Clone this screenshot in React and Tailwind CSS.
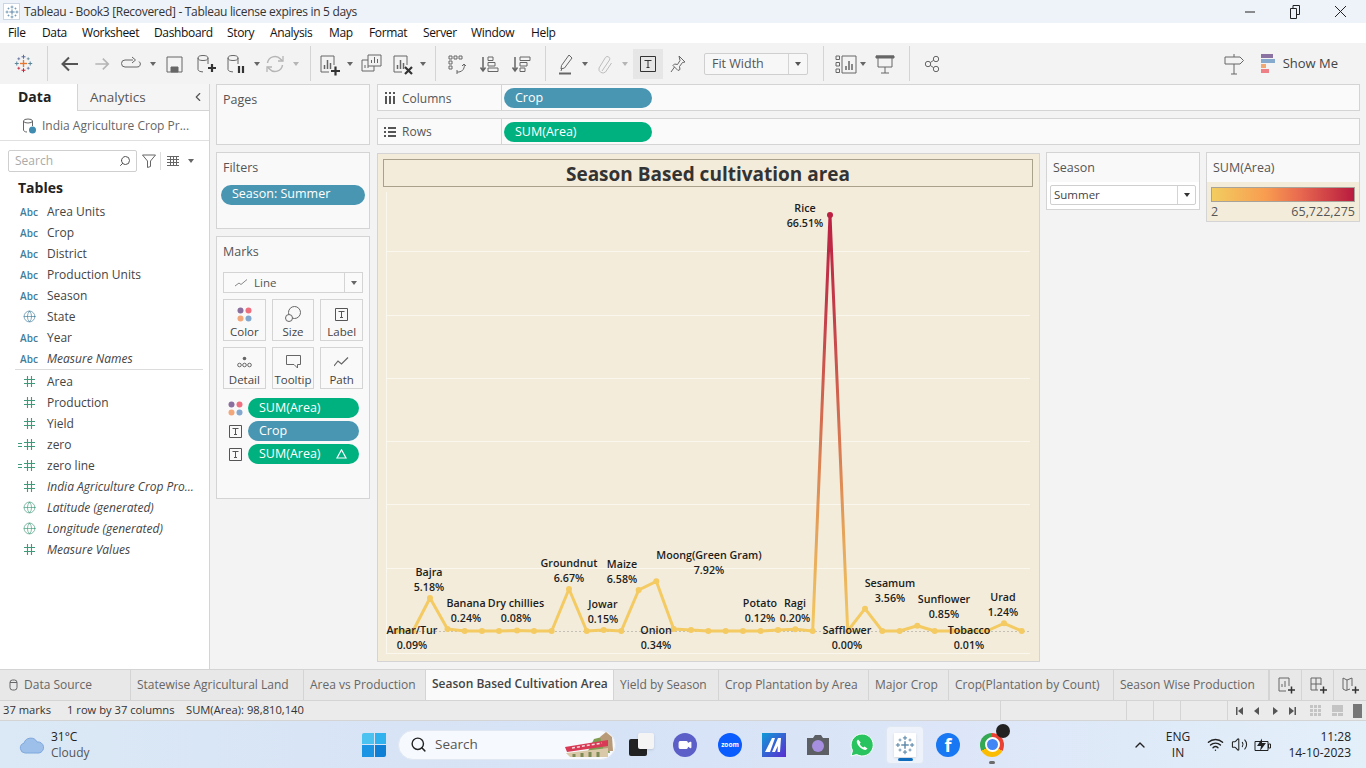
import { ChevronLeft, Globe, Search, Wifi, Volume2, ChevronUp, Video } from "lucide-react";

const points = [
  [395.6, 631], [413, 631], [430, 598], [447.5, 629], [464.7, 631], [482, 631], [499, 631], [517, 630.5], [534, 631],
  [551.7, 631], [569, 589], [586.7, 631], [603.7, 630], [621.3, 631], [638.7, 590], [656.3, 581.3], [673.7, 629],
  [691, 630], [708.3, 631], [725.7, 631], [743, 631], [760.7, 631], [778, 630], [795.3, 629.3], [812.7, 631],
  [830, 215], [847.7, 631], [865, 608.7], [882.3, 631], [899.7, 631], [917.3, 625.7], [934.7, 631], [952, 631],
  [969.3, 631], [986.7, 631], [1004, 623.3], [1021.7, 631],
];

const labels = [
  ["Rice", "66.51%", 805, 208],
  ["Arhar/Tur", "0.09%", 412, 630],
  ["Bajra", "5.18%", 429, 572],
  ["Banana", "0.24%", 466, 603],
  ["Dry chillies", "0.08%", 516, 603],
  ["Groundnut", "6.67%", 569, 563],
  ["Jowar", "0.15%", 603, 604],
  ["Maize", "6.58%", 622, 564],
  ["Moong(Green Gram)", "7.92%", 709, 555],
  ["Onion", "0.34%", 656, 630],
  ["Potato", "0.12%", 760, 603],
  ["Ragi", "0.20%", 795, 603],
  ["Safflower", "0.00%", 847, 630],
  ["Sesamum", "3.56%", 890, 583],
  ["Sunflower", "0.85%", 944, 599],
  ["Tobacco", "0.01%", 969, 630],
  ["Urad", "1.24%", 1003, 597],
];

const fields = [
  ["abc", "Area Units"], ["abc", "Crop"], ["abc", "District"], ["abc", "Production Units"],
  ["abc", "Season"], ["globe", "State"], ["abc", "Year"], ["abc", "Measure Names", true],
];

const measures = [
  ["hash", "Area"], ["hash", "Production"], ["hash", "Yield"], ["calc", "zero"], ["calc", "zero line"],
  ["hash", "India Agriculture Crop Pro...", true], ["gglobe", "Latitude (generated)", true],
  ["gglobe", "Longitude (generated)", true], ["hash", "Measure Values", true],
];

const menus = [
  ["File", "w-[34px]"], ["Data", "w-[40px]"], ["Worksheet", "w-[72px]"], ["Dashboard", "w-[73px]"], ["Story", "w-[43px]"],
  ["Analysis", "w-[59px]"], ["Map", "w-[40px]"], ["Format", "w-[54px]"], ["Server", "w-[48px]"], ["Window", "w-[60px]"], ["Help", "w-[40px]"],
];

const tabs = [
  ["Statewise Agricultural Land", "w-[173px]"],
  ["Area vs Production", "w-[122px]"],
  ["Season Based Cultivation Area", "w-[188px]", true],
  ["Yield by Season", "w-[105px]"],
  ["Crop Plantation by Area", "w-[150px]"],
  ["Major Crop", "w-[80px]"],
  ["Crop(Plantation by Count)", "w-[165px]"],
  ["Season Wise Production", "w-[155px]"],
];

function TableauMark({ size = 20, c1 = "#5b87a8", c2 = "#5b87a8", c3 = "#5b87a8", c4 = "#5b87a8" }) {
  const plus = (x, y, r, color, w) => (
    <g stroke={color} strokeWidth={w}>
      <line x1={x - r} y1={y} x2={x + r} y2={y} />
      <line x1={x} y1={y - r} x2={x} y2={y + r} />
    </g>
  );
  return (
    <svg width={size} height={size} viewBox="0 0 24 24" fill="none">
      {plus(12, 12, 4.5, c1, 1.7)}
      {plus(12, 3.5, 2.5, c2, 1.3)}
      {plus(12, 20.5, 2.5, c3, 1.3)}
      {plus(3.5, 12, 2.5, c4, 1.3)}
      {plus(20.5, 12, 2.5, c4, 1.3)}
      {plus(6, 6, 1.8, c2, 1)}
      {plus(18, 6, 1.8, c4, 1)}
      {plus(6, 18, 1.8, c3, 1)}
      {plus(18, 18, 1.8, c2, 1)}
    </svg>
  );
}

function Ic({ children, w = 24, h = 24, stroke = "#666" }) {
  return (
    <svg width={w} height={h} viewBox={`0 0 ${w} ${h}`} fill="none" stroke={stroke} strokeWidth="1">
      {children}
    </svg>
  );
}

function Slot({ className, children }) {
  return <div className={`flex items-center justify-center shrink-0 ${className}`}>{children}</div>;
}

function Caret({ color = "#666" }) {
  return (
    <svg width="6" height="4" viewBox="0 0 6 4" className="block shrink-0">
      <path d="M0 0h6L3 4z" fill={color} />
    </svg>
  );
}

function Sep() {
  return <div className="w-px h-[35px] bg-[#d4d4d4] shrink-0" />;
}

function Cyl({ children, stroke = "#666" }) {
  return (
    <Ic stroke={stroke}>
      <ellipse cx="10" cy="6" rx="5" ry="2.5" />
      <path d="M5 6v11.500c0 1.300 2 2.300 5 2.400M15 6v6" />
      {children}
    </Ic>
  );
}

function BarBox({ children }) {
  return (
    <Ic>
      <path d="M17 13V4H4v16h8" />
      <path d="M7.500 17v-4M10.500 17V8M13.500 17v-6" strokeWidth="1.500" />
      {children}
    </Ic>
  );
}

function Toolbar() {
  return (
    <div className="flex items-center h-[41px] bg-[#f3f3f3] shrink-0">
      <Slot className="w-[47px]">
        <TableauMark size={19} c1="#e8762c" c2="#5b6c9e" c3="#c72037" c4="#5b879b" />
      </Slot>
      <Sep />
      <Slot className="w-[44px]">
        <Ic stroke="#555"><path d="M20 12H5M11 5.500 4.500 12l6.500 6.500" strokeWidth="2" /></Ic>
      </Slot>
      <Slot className="w-[20px]">
        <Ic stroke="#b5b5b5"><path d="M4 12h15M13 5.500l6.500 6.500-6.500 6.500" strokeWidth="2" /></Ic>
      </Slot>
      <Slot className="w-[38px]">
        <Ic><path d="M14 8H6a3 3 0 0 0 0 7h12a3 3 0 0 0 2-5.500M13 5l3.500 3-3.500 3" /></Ic>
      </Slot>
      <Slot className="w-[5px]"><Caret /></Slot>
      <Slot className="w-[38px]">
        <Ic><path d="M5 5h15v15H5z" /><path d="M9 20v-5h7v5z" fill="#666" /></Ic>
      </Slot>
      <Slot className="w-[24px]">
        <Cyl><path d="M15 16h8M19 12v8" strokeWidth="2.200" stroke="#333" /></Cyl>
      </Slot>
      <Slot className="w-[36px]">
        <Cyl><path d="M16 14v7M20 14v7" strokeWidth="2.200" stroke="#333" /></Cyl>
      </Slot>
      <Slot className="w-[7px]"><Caret /></Slot>
      <Slot className="w-[30px]">
        <Ic stroke="#b5b5b5"><path d="M4.500 11a7.500 7.500 0 0 1 13-4l2 2M19.500 13a7.500 7.500 0 0 1-13 4l-2-2" strokeWidth="1.500" /><path d="M20 4v5h-5M4 20v-5h5" strokeWidth="1.300" /></Ic>
      </Slot>
      <Slot className="w-[12px]"><Caret color="#b5b5b5" /></Slot>
      <div className="w-[8px] shrink-0" />
      <Sep />
      <Slot className="w-[36px]">
        <BarBox><path d="M14 19h9M18.500 14.500v9" strokeWidth="2.200" stroke="#333" /></BarBox>
      </Slot>
      <Slot className="w-[6px]"><Caret /></Slot>
      <Slot className="w-[36px]">
        <Ic><path d="M9 14V3h13v11H9z" /><path d="M12.500 11V8M15.500 11V5M18.500 11V7" /><path d="M9 8H3v11h12v-5" /><path d="M6 16v-3M9 16v-2" /></Ic>
      </Slot>
      <Slot className="w-[26px]">
        <BarBox><path d="M15 15l7 7M22 15l-7 7" strokeWidth="2.200" stroke="#333" /></BarBox>
      </Slot>
      <Slot className="w-[15px]"><Caret /></Slot>
      <div className="w-[5px] shrink-0" />
      <Sep />
      <Slot className="w-[42px]">
        <Ic>
          <path d="M4 4h3v3H4zM9 4h3v3H9zM14 4h3v3h-3zM4 9h3v3H4zM4 14h3v3H4zM14 20h-2M19 12a6 6 0 0 1-5 8" />
          <path d="M17 14l2-2 2 2M12 18v4" />
        </Ic>
      </Slot>
      <Slot className="w-[22px]">
        <Ic w={22}><path d="M5 5v13M2.500 15.500 5 19l2.500-3.500" strokeWidth="1.500" /><path d="M10 5h5v3.500h-5zM10 10.500h7V14h-7zM10 16h10v3.500H10z" /></Ic>
      </Slot>
      <Slot className="w-[42px]">
        <Ic w={22}><path d="M5 5v13M2.500 15.500 5 19l2.500-3.500" strokeWidth="1.500" /><path d="M10 5h10v3.500H10zM10 10.500h7V14h-7zM10 16h5v3.500h-5z" /></Ic>
      </Slot>
      <div className="w-[3px] shrink-0" />
      <Sep />
      <div className="w-[6px] shrink-0" />
      <Slot className="w-[30px]">
        <Ic><path d="M14 3l3 3-7.500 10-3.500 1 .5-3.500zM7 16l-1 3" /><path d="M4 21.500h12" strokeWidth="2" /></Ic>
      </Slot>
      <Slot className="w-[6px]"><Caret /></Slot>
      <Slot className="w-[34px]">
        <Ic stroke="#bdbdbd"><path d="M9 19l7.500-11a2.400 2.400 0 0 0-4-2.600L6 16a4 4 0 0 0 6.500 4l6-9" /></Ic>
      </Slot>
      <Slot className="w-[6px]"><Caret color="#b5b5b5" /></Slot>
      <div className="w-[5px] shrink-0" />
      <Slot className="w-[30px] h-[30px] bg-[#e6e6e6]">
        <Ic w={18} h={18} stroke="#333">
          <path d="M1.500 1.500h15v15h-15z" />
          <path d="M5.500 5.500h7M9 5.500v7M7.500 12.500h3" strokeWidth="1" />
        </Ic>
      </Slot>
      <Slot className="w-[29px]">
        <Ic w={18} h={18}><path d="M10 1l6 6-2.500.5-3 4 .5 3-2 1-5-5 1.500-1.500 3 .5 2.500-4zM5.500 12 2 17" /></Ic>
      </Slot>
      <div className="w-[12px] shrink-0" />
      <div className="flex w-[104px] h-[22px] border border-[#cfcfcf] rounded-[2px] bg-[#f7f7f7] shrink-0">
        <div className="w-[84px] border-r border-[#d4d4d4] pl-[7px] text-[12.5px] leading-[19px] text-[#555]">Fit Width</div>
        <div className="flex-1 flex items-center justify-center"><Caret color="#555" /></div>
      </div>
      <div className="w-[15px] shrink-0" />
      <Sep />
      <div className="w-[7px] shrink-0" />
      <Slot className="w-[29px]">
        <Ic>
          <path d="M8 4h14v17H8z" />
          <path d="M12 18v-4M15 18V9M18 18v-6" strokeWidth="1.500" />
          <path d="M2 4h3.500v3.500H2zM2 10.500h3.500V14H2zM2 17h3.500v3.500H2z" />
        </Ic>
      </Slot>
      <Slot className="w-[6px]"><Caret /></Slot>
      <Slot className="w-[38px]">
        <Ic><path d="M3 4h18M5 4v11h14V4M12 15v6M8 21h8" /><path d="M3 4h18v2H3z" fill="#666" /></Ic>
      </Slot>
      <div className="w-[5px] shrink-0" />
      <Sep />
      <Slot className="w-[44px]">
        <Ic>
          <circle cx="8" cy="12" r="2.700" /><circle cx="16" cy="7" r="2.700" /><circle cx="16" cy="17" r="2.700" />
          <path d="M10.300 10.500l3.400-2.200M10.300 13.500l3.400 2.200" />
        </Ic>
      </Slot>
      <div className="ml-auto flex items-center pr-[28px]">
        <Slot className="w-[30px]">
          <Ic><path d="M3 5h15l3.500 3.500L18 12H3zM12 2v3M12 12v10M9 22h6" /></Ic>
        </Slot>
        <div className="flex flex-col ml-[12px] w-[14px] gap-px">
          <div className="h-[4px] w-[12px] bg-[#8a72a3]" />
          <div className="h-[4px] w-[14px] bg-[#86aacd]" />
          <div className="h-[4px] w-[5px] bg-[#f1a873]" />
          <div className="h-[4px] w-[8px] bg-[#ef7f86]" />
        </div>
        <span className="ml-[8px] text-[13px] text-[#444] whitespace-nowrap">Show Me</span>
      </div>
    </div>
  );
}

function FieldIcon({ type }) {
  if (type === "abc") return <span className="text-[10px] leading-none font-semibold text-[#3f7d9b]">Abc</span>;
  if (type === "globe") return <Globe size={13} strokeWidth={1.2} color="#3f7d9b" />;
  if (type === "gglobe") return <Globe size={13} strokeWidth={1.2} color="#3e9a78" />;
  return (
    <span className="flex items-center">
      {type === "calc" && (
        <svg width="5" height="6" viewBox="0 0 5 6" stroke="#3e9a78" className="mr-px -ml-[5px]">
          <path d="M0 1.500h4M0 4.500h4" />
        </svg>
      )}
      <svg width="11" height="11" viewBox="0 0 11 11" stroke="#3e9a78" strokeWidth="1.100">
        <path d="M3.500 0v11M7.500 0v11M0 3.500h11M0 7.500h11" />
      </svg>
    </span>
  );
}

function FieldRow({ icon, name, italic }) {
  return (
    <div className="flex items-center h-[21px]">
      <div className="w-[47px] pl-[19px] shrink-0">
        <div className="w-[20px] flex justify-center"><FieldIcon type={icon} /></div>
      </div>
      <span className={`text-[12px] text-[#444] whitespace-nowrap ${italic ? "italic" : ""}`}>{name}</span>
    </div>
  );
}

function DataPanel() {
  return (
    <div className="w-[210px] shrink-0 bg-white border-r border-[#d4d4d4] flex flex-col">
      <div className="flex h-[27px] shrink-0">
        <div className="w-[77px] pl-[18px] text-[14px] leading-[26px] font-bold text-[#222]">Data</div>
        <div className="flex-1 flex items-center pl-[12px] bg-[#f5f5f5] border-l border-b border-[#d4d4d4]">
          <span className="text-[13.5px] text-[#555]">Analytics</span>
          <ChevronLeft size={14} color="#555" className="ml-auto mr-[4px]" />
        </div>
      </div>
      <div className="flex items-center h-[30px] border-b border-[#e0e0e0] pl-[21px] shrink-0">
        <svg width="16" height="18" viewBox="0 0 16 18" fill="none" stroke="#666">
          <ellipse cx="7" cy="4" rx="4.500" ry="2" />
          <path d="M2.500 4v9c0 1 1.500 2 3.500 2M11.500 4v5" />
          <circle cx="11.500" cy="13" r="3.500" fill="#3f8cb0" stroke="none" />
        </svg>
        <span className="ml-[5px] text-[12px] text-[#666] whitespace-nowrap">India Agriculture Crop Pr...</span>
      </div>
      <div className="flex items-center h-[22px] mt-[9px] shrink-0">
        <div className="ml-[8px] w-[129px] h-[22px] border border-[#cfcfcf] rounded-[2px] flex items-center pl-[6px] pr-[5px]">
          <span className="text-[12px] text-[#aaa]">Search</span>
          <Search size={12} color="#555" className="ml-auto -scale-x-100" />
        </div>
        <svg width="14" height="14" viewBox="0 0 14 14" fill="none" stroke="#666" className="ml-[5px]">
          <path d="M.5 1h13L8.500 7v5.500L5.500 13.500V7z" />
        </svg>
        <div className="w-px h-[18px] bg-[#ddd] ml-[4px]" />
        <svg width="12" height="10" viewBox="0 0 12 10" stroke="#666" className="ml-[6px]" strokeWidth="1">
          <path d="M0 .5h12M0 3.500h12M0 6.500h12M0 9.500h12M3.500 0v10M6.500 0v10M9.500 0v10" />
        </svg>
        <span className="ml-[9px]"><Caret /></span>
      </div>
      <div className="pl-[18px] mt-[6px] text-[14px] leading-[20px] font-bold text-[#222]">Tables</div>
      <div className="mt-[3px]">
        {fields.map(([icon, name, italic]) => (
          <FieldRow key={name} icon={icon} name={name} italic={italic} />
        ))}
      </div>
      <div className="h-px bg-[#dcdcdc] ml-[15px] mr-[6px]" />
      <div className="mt-px">
        {measures.map(([icon, name, italic]) => (
          <FieldRow key={name} icon={icon} name={name} italic={italic} />
        ))}
      </div>
    </div>
  );
}

function Pill({ className, children }) {
  return (
    <div className={`flex items-center rounded-full h-[20px] pl-[11px] pr-[12px] text-[12.5px] text-white whitespace-nowrap ${className}`}>
      {children}
    </div>
  );
}

function Dots() {
  return (
    <svg width="15" height="15" viewBox="0 0 15 15">
      <circle cx="3.500" cy="3.500" r="3" fill="#8b6f9e" />
      <circle cx="11.500" cy="3.500" r="3" fill="#ef6f7f" />
      <circle cx="3.500" cy="11.500" r="3" fill="#f2a77a" />
      <circle cx="11.500" cy="11.500" r="3" fill="#83a8cf" />
    </svg>
  );
}

function TBox() {
  return (
    <svg width="13" height="13" viewBox="0 0 13 13" fill="none" stroke="#555">
      <path d="M.5.500h12v12H.5z" />
      <path d="M3.500 3.500h6M6.500 3.500v6M5 9.500h3" />
    </svg>
  );
}

function MarkButton({ label, children }) {
  return (
    <div className="flex-1 h-[42px] border border-[#d4d4d4] flex flex-col items-center pt-[5px]">
      <div className="h-[18px] flex items-center">{children}</div>
      <span className="text-[11.5px] leading-[16px] text-[#444] mt-px">{label}</span>
    </div>
  );
}

function ShelfColumn() {
  return (
    <div className="w-[154px] shrink-0 ml-[6px] flex flex-col">
      <div className="h-[61px] border border-[#d4d4d4] bg-[#f9f9f9] pl-[6px] pt-[6px] text-[12.5px] text-[#555] shrink-0">Pages</div>
      <div className="h-[77px] mt-[7px] border border-[#d4d4d4] bg-[#f9f9f9] shrink-0">
        <div className="pl-[6px] pt-[6px] text-[12.5px] text-[#555]">Filters</div>
        <Pill className="bg-[#4996b2] mx-[4px] mt-[7px]">Season: Summer</Pill>
      </div>
      <div className="h-[263px] mt-[7px] border border-[#d4d4d4] bg-[#f9f9f9] px-[6px] shrink-0">
        <div className="pt-[6px] text-[12.5px] text-[#555] leading-[18px]">Marks</div>
        <div className="flex items-center h-[21px] mt-[11px] border border-[#d4d4d4] bg-[#fafafa]">
          <svg width="12" height="8" viewBox="0 0 12 8" fill="none" stroke="#888" className="ml-[11px]">
            <path d="M0 7l4-3 2 1.500L12 .5" />
          </svg>
          <span className="ml-[7px] text-[11.5px] text-[#555]">Line</span>
          <div className="ml-auto w-[18px] h-full border-l border-[#d4d4d4] flex items-center justify-center"><Caret /></div>
        </div>
        <div className="flex gap-[6px] mt-[6px]">
          <MarkButton label="Color"><Dots /></MarkButton>
          <MarkButton label="Size">
            <svg width="16" height="16" viewBox="0 0 16 16" fill="none" stroke="#666">
              <circle cx="9.500" cy="6.500" r="6" />
              <circle cx="4" cy="12" r="3.500" fill="#f9f9f9" />
            </svg>
          </MarkButton>
          <MarkButton label="Label"><TBox /></MarkButton>
        </div>
        <div className="flex gap-[6px] mt-[6px]">
          <MarkButton label="Detail">
            <svg width="15" height="12" viewBox="0 0 15 12" fill="none" stroke="#666">
              <circle cx="7.500" cy="2.500" r="1.800" fill="#666" stroke="none" />
              <circle cx="2.500" cy="9" r="1.800" /><circle cx="7.500" cy="9" r="1.800" /><circle cx="12.500" cy="9" r="1.800" />
            </svg>
          </MarkButton>
          <MarkButton label="Tooltip">
            <svg width="15" height="14" viewBox="0 0 15 14" fill="none" stroke="#666">
              <path d="M.5.500h14v9h-3v3.500l-3.500-3.500H.5z" />
            </svg>
          </MarkButton>
          <MarkButton label="Path">
            <svg width="15" height="10" viewBox="0 0 15 10" fill="none" stroke="#666" strokeWidth="1.200">
              <path d="M0 9l4-5 3.500 3L14 .5" />
            </svg>
          </MarkButton>
        </div>
        <div className="flex flex-col gap-[3px] mt-[9px]">
          <div className="flex items-center">
            <div className="w-[25px] flex justify-center shrink-0"><Dots /></div>
            <Pill className="bg-[#00b180] w-[111px]">SUM(Area)</Pill>
          </div>
          <div className="flex items-center">
            <div className="w-[25px] flex justify-center shrink-0"><TBox /></div>
            <Pill className="bg-[#4996b2] w-[111px]">Crop</Pill>
          </div>
          <div className="flex items-center">
            <div className="w-[25px] flex justify-center shrink-0"><TBox /></div>
            <Pill className="bg-[#00b180] w-[111px]">
              SUM(Area)
              <svg width="11" height="10" viewBox="0 0 11 10" fill="none" stroke="white" strokeWidth="1.200" className="ml-auto">
                <path d="M5.500 .800 10 9H1z" />
              </svg>
            </Pill>
          </div>
        </div>
      </div>
    </div>
  );
}

function Shelf({ label, icon, pill, className, textClass }) {
  return (
    <div className={`flex h-[27px] w-[983px] border border-[#d4d4d4] bg-[#fafafa] shrink-0 ${className}`}>
      <div className="w-[124px] flex items-center pl-[6px] border-r border-[#d4d4d4] shrink-0">
        <span className="w-[18px] flex">{icon}</span>
        <span className={`text-[12px] text-[#555] ${textClass}`}>{label}</span>
      </div>
      <div className="pl-[2px] pt-[3px]">{pill}</div>
    </div>
  );
}

function Chart() {
  const rows = [251, 315, 378, 441, 504, 568, 653];
  const yellow = "#f4ca62";
  const line = points.slice(0, 25).map(p => p.join(",")).join(" ");
  const tail = points.slice(26).map(p => p.join(",")).join(" ");
  return (
    <svg width="650" height="471" viewBox="383 187 650 471" className="block">
      <defs>
        <linearGradient id="rice" gradientUnits="userSpaceOnUse" x1="0" y1="215" x2="0" y2="631">
          <stop offset="0" stopColor="#bb1f42" />
          <stop offset="0.25" stopColor="#c4404a" />
          <stop offset="0.5" stopColor="#d46f50" />
          <stop offset="0.75" stopColor="#e5a159" />
          <stop offset="1" stopColor={yellow} />
        </linearGradient>
      </defs>
      <line x1="386.500" y1="192" x2="386.500" y2="653" stroke="#faf7ef" />
      {rows.map(y => (
        <line key={y} x1="386" y1={y + 0.5} x2="1030" y2={y + 0.5} stroke="#faf7ef" />
      ))}
      <line x1="387" y1="631.500" x2="1030" y2="631.500" stroke="#c4c0b6" strokeDasharray="2 2" />
      <polyline points={line} fill="none" stroke={yellow} strokeWidth="3" strokeLinejoin="round" />
      <polyline points={tail} fill="none" stroke={yellow} strokeWidth="3" strokeLinejoin="round" />
      <path d="M812.700 631 830 215 847.700 631" fill="none" stroke="url(#rice)" strokeWidth="3" strokeLinejoin="round" />
      {points.map(([x, y]) => (
        <circle key={x} cx={x} cy={y} r="3" fill={y === 215 ? "#bb1f42" : yellow} />
      ))}
      {labels.map(([name, pct, x, y]) => (
        <text key={name} textAnchor="middle" fontSize="10.7" fontWeight="600" fill="#1c1c1c">
          <tspan x={x} y={y + 4}>{name}</tspan>
          <tspan x={x} y={y + 19}>{pct}</tspan>
        </text>
      ))}
    </svg>
  );
}

function Main() {
  return (
    <div className="flex flex-1 min-h-0 bg-[#f3f3f3]">
      <DataPanel />
      <ShelfColumn />
      <div className="ml-[7px] flex flex-col">
        <Shelf
          label="Columns"
          textClass="pt-[2px]"
          icon={
            <svg width="12" height="12" viewBox="0 0 12 12" fill="#555">
              <path d="M1 0h2v2H1zM5 0h2v2H5zM9 0h2v2H9zM1 4h2v8H1zM5 4h2v8H5zM9 4h2v8H9z" />
            </svg>
          }
          pill={<Pill className="bg-[#4996b2] w-[148px]">Crop</Pill>}
        />
        <Shelf
          className="mt-[7px]"
          label="Rows"
          icon={
            <svg width="12" height="10" viewBox="0 0 12 10" fill="#555">
              <path d="M0 0h2v2H0zM4 0h8v2H4zM0 4h2v2H0zM4 4h8v2H4zM0 8h2v2H0zM4 8h8v2H4z" />
            </svg>
          }
          pill={<Pill className="bg-[#00b180] w-[148px]">SUM(Area)</Pill>}
        />
        <div className="flex mt-[8px]">
          <div className="w-[663px] h-[509px] border border-[#d4d4d4] bg-[#f3ecdb] pt-[5px] pl-[5px] shrink-0">
            <div className="w-[650px] h-[28px] border border-[#a9a18c] flex items-center justify-center pt-[3px] text-[19px] font-bold text-[#333]">
              Season Based cultivation area
            </div>
            <Chart />
          </div>
          <div className="ml-[6px] w-[154px] h-[58px] -mt-px border border-[#d4d4d4] bg-white shrink-0">
            <div className="h-[29px] bg-[#f9f9f9] pl-[6px] pt-[6px] text-[12.5px] leading-[18px] text-[#555]">Season</div>
            <div className="mx-[3px] mt-[3px] h-[20px] border border-[#cfcfcf] rounded-[2px] bg-white flex items-center">
              <span className="pl-[3px] text-[11.5px] text-[#444]">Summer</span>
              <div className="ml-auto w-[18px] h-full border-l border-[#d4d4d4] flex items-center justify-center"><Caret color="#333" /></div>
            </div>
          </div>
          <div className="ml-[6px] w-[154px] h-[70px] -mt-px border border-[#d4d4d4] bg-[#f3ecdb] shrink-0">
            <div className="h-[29px] bg-[#f9f9f9] pl-[6px] pt-[6px] text-[12.5px] leading-[18px] text-[#555]">SUM(Area)</div>
            <div className="mx-[4px] mt-[5px] h-[15px] border border-[#a8a39a] bg-[linear-gradient(90deg,#f2cd60_0%,#f89c50_38%,#e8694f_62%,#b81b3f_100%)]" />
            <div className="flex justify-between mx-[4px] mt-[2px] text-[12.5px] leading-[16px] text-[#555]">
              <span>2</span>
              <span>65,722,275</span>
            </div>
          </div>
        </div>
      </div>
    </div>
  );
}

function Tabs() {
  return (
    <div className="flex h-[31px] bg-[#e8e8e8] border-t border-[#d4d4d4] shrink-0">
      <div className="w-[131px] flex items-center pl-[9px] border-r border-[#d4d4d4] shrink-0 text-[12px] text-[#666]">
        <svg width="9" height="12" viewBox="0 0 9 12" fill="none" stroke="#666" className="mr-[6px]">
          <rect x="1" y="1" width="7" height="10" rx="2.500" />
          <path d="M1 3.500h7" />
        </svg>
        Data Source
      </div>
      {tabs.map(([name, w, active]) => (
        <div
          key={name}
          className={`${w} shrink-0 flex items-center pl-[6px] border-r border-[#d4d4d4] whitespace-nowrap text-[12px] ${
            active ? "bg-[#fafafa] font-semibold text-[#444] pb-[2px]" : "text-[#666]"
          }`}
        >
          {name}
        </div>
      ))}
      <div className="w-[33px] shrink-0 flex items-center justify-center border-r border-l border-[#d4d4d4]">
        <svg width="18" height="18" viewBox="0 0 18 18" fill="none" stroke="#666">
          <path d="M12 10V2H2v13h7M5 11V8M8 11V5" /><path d="M11 14h7M14.500 10.500v7" stroke="#333" strokeWidth="1.500" />
        </svg>
      </div>
      <div className="w-[32px] shrink-0 flex items-center justify-center border-r border-[#d4d4d4]">
        <svg width="18" height="18" viewBox="0 0 18 18" fill="none" stroke="#666">
          <path d="M12 9V2H2v12h7M2 8h10M7 2v12" /><path d="M11 14h7M14.500 10.500v7" stroke="#333" strokeWidth="1.500" />
        </svg>
      </div>
      <div className="flex-1 flex items-center justify-center">
        <svg width="18" height="18" viewBox="0 0 18 18" fill="none" stroke="#666">
          <path d="M2 2l4 2 5-2v8M2 2v11l3 1.500 4-1.500M6 4v10" /><path d="M11 14h7M14.500 10.500v7" stroke="#333" strokeWidth="1.500" />
        </svg>
      </div>
    </div>
  );
}

function StatusBar() {
  return (
    <div className="flex h-[21px] bg-[#ebebeb] border-t border-[#d4d4d4] border-b items-center text-[11.2px] text-[#333] shrink-0">
      <span className="w-[67px] pl-[3px] shrink-0">37 marks</span>
      <span className="w-[119px] shrink-0">1 row by 37 columns</span>
      <span className="w-[814px] shrink-0">SUM(Area): 98,810,140</span>
      <div className="w-[126px] h-full border-l border-[#d4d4d4] shrink-0" />
      <div className="w-[27px] h-full border-l border-[#d4d4d4] shrink-0" />
      <div className="w-[27px] h-full border-l border-[#d4d4d4] shrink-0" />
      <div className="w-[47px] h-full border-l border-[#d4d4d4] shrink-0" />
      <div className="flex-1 h-full border-l border-[#d4d4d4] flex items-center pl-[8px]">
        <svg width="126" height="14" viewBox="0 0 126 14" fill="#555">
          <path d="M0 3h1.500v8H0zM7 3v8L2 7zM23 3v8l-5-4zM37 3l5 4-5 4zM53 3l5 4-5 4zM58.500 3H60v8h-1.500z" />
          <g fill="#c4c4c4">
            <path d="M74 1h3v3h-3zM78 1h3v3h-3zM82 1h3v3h-3zM74 5h3v3h-3zM78 5h3v3h-3zM82 5h3v3h-3zM74 9h3v3h-3zM78 9h3v3h-3zM82 9h3v3h-3z" />
            <path d="M96 1h11v7H96zM96 9h5v3h-5zM102 9h5v3h-5z" />
          </g>
          <path d="M117 0h11v14h-11z" fill="#777" />
        </svg>
      </div>
    </div>
  );
}

function Taskbar() {
  return (
    <div className="flex items-center h-[47px] bg-[linear-gradient(90deg,#dbe8f5_0%,#d6e2f6_45%,#dce6f8_70%,#e3eff9_100%)] shrink-0 text-[#222]">
      <svg width="26" height="18" viewBox="0 0 26 18" className="ml-[19px] shrink-0">
        <path d="M6 17a5 5 0 0 1-1-9.800A7 7 0 0 1 18 6a5.500 5.500 0 0 1 2 11z" fill="#9dc0ea" stroke="#7fa8dc" strokeWidth="1" />
      </svg>
      <div className="ml-[6px] w-[60px] text-[12px] leading-[16px] shrink-0">
        <div>31°C</div>
        <div className="text-[#555]">Cloudy</div>
      </div>
      <div className="ml-[251px] grid grid-cols-2 gap-px w-[24px] h-[24px] shrink-0">
        <div className="bg-[#4cc2f1] rounded-tl-[2px]" />
        <div className="bg-[#30b2ef]" />
        <div className="bg-[#1a94e3]" />
        <div className="bg-[#0f7fd6] rounded-br-[2px]" />
      </div>
      <div className="ml-[12px] w-[218px] h-[30px] rounded-full bg-[#f6f9fd] border border-[#e2e8f2] flex items-center pl-[11px] shrink-0">
        <Search size={17} color="#222" strokeWidth={2} />
        <span className="ml-[8px] text-[13.5px] text-[#555]">Search</span>
        <svg width="50" height="28" viewBox="0 0 50 28" className="ml-auto mr-px">
          <path d="M24 20 30 8 38 6 44 12 46 22z" fill="#7f9c52" />
          <path d="M36 6 42 1 48 6 49 20 40 20z" fill="#b89a78" />
          <path d="M2 22 44 17v9H6z" fill="#d9c9a8" />
          <path d="M10 26v-3M18 26v-4M26 26v-5M34 26v-5" stroke="#7c8a55" strokeWidth="3" />
          <path d="M1 16 44 9v6L3 21z" fill="#d83a55" />
          <path d="M8 17l30-5" stroke="#f3d9dd" strokeWidth="1.500" strokeDasharray="3 2" />
        </svg>
      </div>
      <div className="relative ml-[13px] w-[25px] h-[23px] shrink-0">
        <div className="absolute left-0 bottom-0 w-[18px] h-[17px] bg-[#222] rounded-[2px]" />
        <div className="absolute right-0 top-0 w-[16px] h-[16px] bg-[#f4f4f4] rounded-[2px] shadow-sm" />
      </div>
      <div className="ml-[19px] w-[24px] h-[24px] rounded-full bg-[#5b5fc7] flex items-center justify-center shrink-0">
        <Video size={14} color="white" fill="white" />
      </div>
      <div className="ml-[21px] w-[24px] h-[24px] rounded-full bg-[#0b5cff] flex items-center justify-center text-[6.5px] font-bold text-white shrink-0">zoom</div>
      <div className="ml-[20px] w-[24px] h-[24px] bg-[linear-gradient(135deg,#0f9bd7,#5b2bd0)] flex items-center justify-center shrink-0">
        <svg width="18" height="14" viewBox="0 0 18 14" fill="white"><path d="M0 14 7 0h3L5 14zM7 14 13 0h3l-1 14h-2.500l.3-6L10 14z" /></svg>
      </div>
      <svg width="24" height="22" viewBox="0 0 24 22" className="ml-[20px] shrink-0">
        <path d="M1 4h6l2-3h6l2 3h6v17H1z" fill="#5c5f63" />
        <circle cx="12" cy="12" r="6" fill="#a78fe0" />
      </svg>
      <svg width="24" height="24" viewBox="0 0 24 24" className="ml-[20px] shrink-0">
        <path d="M12 1a11 11 0 0 0-9.500 16.500L1 23l5.700-1.500A11 11 0 1 0 12 1z" fill="#29c45f" stroke="white" />
        <path d="M8 6.500 6.800 8c-.5 3 4.500 9 9 9l1.700-1.500-3-2-1.300 1c-1.500-.5-3-2.300-3.500-3.700l1-1.300z" fill="white" />
      </svg>
      <div className="ml-[12px] w-[38px] h-[38px] rounded-[4px] bg-[#eef3fb] border border-[#dfe7f3] relative flex items-center justify-center shrink-0">
        <div className="w-[22px] h-[24px] bg-white flex items-center justify-center shadow-sm">
          <TableauMark size={20} />
        </div>
        <div className="absolute bottom-[2px] left-[11px] w-[15px] h-[3px] rounded bg-[#0f6cbd]" />
      </div>
      <div className="ml-[12px] w-[24px] h-[24px] rounded-full bg-[#1877f2] flex items-center justify-center text-white font-bold text-[18px] leading-[24px] shrink-0">f</div>
      <div className="relative ml-[20px] w-[24px] h-[24px] rounded-full bg-[conic-gradient(#e94235_0deg_120deg,#fbbc04_120deg_240deg,#34a853_240deg_360deg)] flex items-center justify-center shrink-0">
        <div className="w-[11px] h-[11px] rounded-full bg-[#4285f4] border-2 border-white box-content" />
        <div className="absolute -top-[9px] right-[-6px] w-[14px] h-[14px] rounded-full bg-[#222]" />
        <div className="absolute -bottom-[7px] left-[9px] w-[6px] h-[3px] rounded bg-[#6b6b6b]" />
      </div>
      <ChevronUp size={16} color="#222" className="ml-[128px] shrink-0" />
      <div className="ml-[12px] w-[36px] text-center text-[12px] leading-[16px] shrink-0">
        <div>ENG</div>
        <div>IN</div>
      </div>
      <Wifi size={17} color="#222" className="ml-[11px] shrink-0" />
      <Volume2 size={17} color="#222" strokeWidth={1.5} className="ml-[7px] shrink-0" />
      <svg width="18" height="14" viewBox="0 0 18 14" fill="none" stroke="#222" className="ml-[6px] shrink-0">
        <path d="M1 3.500h13v9H1zM14.500 6h2v4h-2z" />
        <path d="M8 .5 3 8h4l-1 5 6-8H8z" fill="#222" stroke="none" />
      </svg>
      <div className="ml-auto pr-[15px] text-right text-[12px] leading-[16px]">
        <div>11:28</div>
        <div>14-10-2023</div>
      </div>
    </div>
  );
}

export default function App() {
  return (
    <div className="w-[1366px] h-[768px] overflow-hidden flex flex-col bg-white font-['Open_Sans',sans-serif]">
      {/* title bar */}
      <div className="flex items-center h-[23px] bg-[#eef2f9] shrink-0">
        <div className="ml-[3px] w-[17px] h-[17px] bg-white border border-[#ccd6e2] flex items-center justify-center">
          <TableauMark size={14} />
        </div>
        <span className="ml-[4px] text-[12px] tracking-[-0.3px] text-[#333] whitespace-nowrap">Tableau - Book3 [Recovered] - Tableau license expires in 5 days</span>
        <div className="ml-auto flex items-center">
          <svg width="10" height="2" viewBox="0 0 10 2" className="mr-[35px]"><path d="M0 1h10" stroke="#222" /></svg>
          <svg width="10" height="14" viewBox="0 0 10 14" fill="none" stroke="#222" className="mr-[35px]">
            <path d="M.5 3.500h6v10h-6zM3 3.500V.5h6.500v9H7" />
          </svg>
          <svg width="11" height="11" viewBox="0 0 11 11" stroke="#222" className="mr-[20px]"><path d="M0 0l11 11M11 0 0 11" /></svg>
        </div>
      </div>
      {/* menu bar */}
      <div className="flex items-center h-[20px] bg-white pl-[8px] shrink-0">
        {menus.map(([name, w]) => (
          <span key={name} className={`${w} text-[12px] tracking-[-0.35px] text-[#111] shrink-0`}>{name}</span>
        ))}
      </div>
      <Toolbar />
      <Main />
      <Tabs />
      <StatusBar />
      <Taskbar />
    </div>
  );
}
